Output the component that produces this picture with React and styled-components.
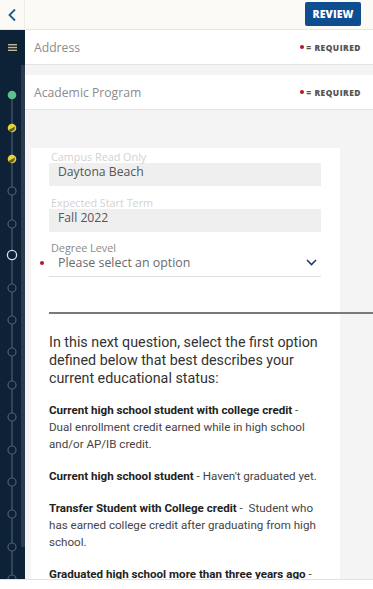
import React from "react";
import styled, { createGlobalStyle } from "styled-components";

const Global = createGlobalStyle`
  html, body { margin: 0; padding: 0; }
  body { width: 373px; height: 589px; overflow: hidden; background: #fff; font-family: "Open Sans", sans-serif; }
`;

const Page = styled.div`
  width: 373px;
  height: 589px;
  display: flex;
  flex-direction: column;
  overflow: hidden;
`;

const TopBar = styled.div`
  height: 30px;
  flex: none;
  display: flex;
  background: #fbfaf5;
  border-bottom: 1px solid #e6e6e6;
  box-sizing: border-box;
`;

const BackCell = styled.div`
  width: 25px;
  flex: none;
  display: flex;
  align-items: center;
  justify-content: center;
  border-right: 1px solid #ebebeb;
  box-sizing: border-box;
  color: #1f5b8e;
`;

const TopFill = styled.div`
  flex: 1;
  display: flex;
  justify-content: flex-end;
  align-items: center;
  padding-right: 12px;
`;

const ReviewButton = styled.button`
  width: 56px;
  height: 24px;
  margin-top: -2px;
  border: none;
  border-radius: 2px;
  background: #0e4d90;
  color: #fff;
  font-family: "Open Sans", sans-serif;
  font-weight: 800;
  font-size: 10.5px;
  letter-spacing: 0.1px;
  padding: 0;
`;

const Body = styled.div`
  flex: 1;
  display: flex;
  min-height: 0;
`;

const Sidebar = styled.div`
  width: 25px;
  flex: none;
  display: flex;
  flex-direction: column;
  background: #0d2137;
`;

const MenuCell = styled.div`
  height: 35px;
  flex: none;
  display: flex;
  align-items: center;
  justify-content: center;
  padding-right: 1px;
`;

const StepArea = styled.div`
  flex: 1;
  display: flex;
  overflow: hidden;
`;

const StepTrack = styled.div`
  width: 21px;
  flex: none;
  overflow: hidden;
`;

const StepStrip = styled.div`
  width: 4px;
  height: 482px;
  background: #2b3b4d;
`;

const Main = styled.div`
  flex: 1;
  display: flex;
  flex-direction: column;
  background: #f4f4f4;
  min-width: 0;
`;

const SectionHeader = styled.div`
  height: 35px;
  flex: none;
  background: #fff;
  display: flex;
  align-items: center;
  justify-content: space-between;
  padding: 0 12px 0 9px;
  border-bottom: 1px solid #e4e4e4;
  box-sizing: border-box;
  margin-bottom: ${(p) => p.$gap || 0}px;
`;

const SectionTitle = styled.span`
  font-family: "Open Sans", sans-serif;
  font-size: 12.2px;
  font-weight: 400;
  color: #8c8c8c;
`;

const Required = styled.span`
  display: flex;
  align-items: center;
  gap: 2px;
  font-family: "Open Sans", sans-serif;
  font-weight: 800;
  font-size: 8.4px;
  letter-spacing: 0.5px;
  color: #555;
`;

const RedDot = styled.span`
  width: 4px;
  height: 4px;
  border-radius: 50%;
  background: #b3162a;
  display: inline-block;
`;

const Canvas = styled.div`
  flex: 1;
  padding: 38px 0 0 6px;
  overflow: hidden;
  min-height: 0;
`;

const Card = styled.div`
  width: 309px;
  background: #fff;
  padding: 3px 0 0 18px;
  box-sizing: border-box;
  height: 100%;
`;

const Field = styled.div`
  width: 272px;
  margin-bottom: ${(p) => p.$mb || 0}px;
`;

const Label = styled.div`
  font-family: "Open Sans", sans-serif;
  font-size: 10.8px;
  line-height: 12px;
  height: 12px;
  padding-left: 2px;
  color: ${(p) => (p.$muted ? "#d2d2d2" : "#8a8a8a")};
`;

const ReadOnlyBox = styled.div`
  height: 23px;
  background: #efefef;
  padding: 0 9px;
  display: flex;
  align-items: flex-start;
  line-height: 17px;
  font-family: "Open Sans", sans-serif;
  font-size: 12.2px;
  color: #555;
`;

const SelectRow = styled.div`
  position: relative;
  height: 23px;
  box-sizing: border-box;
  padding: 0 4px 0 9px;
  display: flex;
  align-items: flex-start;
  justify-content: space-between;
  line-height: 17px;
  border-bottom: 1px solid #dedede;
  font-family: "Open Sans", sans-serif;
  font-size: 12.4px;
  color: #6a6a6a;
  svg { margin-top: 5px; }
`;

const SelectDot = styled(RedDot)`
  position: absolute;
  left: -9px;
  top: 7px;
`;

const Rule = styled.div`
  width: 340px;
  height: 2px;
  background: #7a7a7a;
  margin-top: 35px;
`;

const Intro = styled.p`
  margin: 19px 0 0;
  width: 290px;
  font-family: Roboto, "Liberation Sans", sans-serif;
  font-size: 14.3px;
  line-height: 18px;
  color: #333;
`;

const Item = styled.p`
  margin: 15px 0 0;
  width: 271px;
  font-family: Roboto, "Liberation Sans", sans-serif;
  font-size: 11.6px;
  line-height: 17px;
  color: #444;
  b { font-weight: 700; color: #222; }
`;

const Footer = styled.div`
  height: 9px;
  flex: none;
  background: #fff;
  border-top: 1px solid #e2e2e2;
`;

const steps = [
  { y: 30, k: "green" },
  { y: 63, k: "yellow" },
  { y: 94, k: "yellow" },
  { y: 126, k: "empty" },
  { y: 159, k: "empty" },
  { y: 190, k: "current" },
  { y: 223, k: "empty" },
  { y: 255, k: "empty" },
  { y: 287, k: "empty" },
  { y: 320, k: "empty" },
  { y: 352, k: "empty" },
  { y: 385, k: "empty" },
  { y: 417, k: "empty" },
  { y: 449, k: "empty" },
  { y: 482, k: "empty" },
  { y: 514, k: "empty" },
];

function Stepper() {
  return (
    <svg width="21" height="550" viewBox="0 0 21 550">
      <line x1="12" y1="30" x2="12" y2="550" stroke="#4b5d72" strokeWidth="1.2" />
      {steps.map((s, i) => {
        if (s.k === "green")
          return <circle key={i} cx="12" cy={s.y} r="4.3" fill="#5cc08c" />;
        if (s.k === "yellow")
          return (
            <g key={i}>
              <circle cx="12" cy={s.y} r="4.3" fill="#e7d436" />
              <path d={`M8.2 ${s.y + 2.3} L15 ${s.y - 1.6} L14.6 ${s.y + 1.2} Q13 ${s.y + 4} 10 ${s.y + 4} Z`} fill="#3a3a28" opacity="0.75" />
            </g>
          );
        if (s.k === "current")
          return <circle key={i} cx="12" cy={s.y} r="4.6" fill="#0d2137" stroke="#d6dde5" strokeWidth="1.3" />;
        return <circle key={i} cx="12" cy={s.y} r="4" fill="#0d2137" stroke="#4b5d72" strokeWidth="1.2" />;
      })}
    </svg>
  );
}

export default function App() {
  return (
    <Page>
      <Global />
      <TopBar>
        <BackCell>
          <svg width="10" height="14" viewBox="0 0 10 14">
            <path d="M8 1.5 L2.5 7 L8 12.5" fill="none" stroke="currentColor" strokeWidth="1.8" />
          </svg>
        </BackCell>
        <TopFill>
          <ReviewButton>REVIEW</ReviewButton>
        </TopFill>
      </TopBar>
      <Body>
        <Sidebar>
          <MenuCell>
            <svg width="9" height="7" viewBox="0 0 9 7">
              <rect x="0" y="0" width="9" height="1.4" fill="#c9b98a" />
              <rect x="0" y="2.8" width="9" height="1.4" fill="#c9b98a" />
              <rect x="0" y="5.6" width="9" height="1.4" fill="#c9b98a" />
            </svg>
          </MenuCell>
          <StepArea>
            <StepTrack>
              <Stepper />
            </StepTrack>
            <StepStrip />
          </StepArea>
        </Sidebar>
        <Main>
          <SectionHeader $gap={10}>
            <SectionTitle>Address</SectionTitle>
            <Required><RedDot />= REQUIRED</Required>
          </SectionHeader>
          <SectionHeader>
            <SectionTitle>Academic Program</SectionTitle>
            <Required><RedDot />= REQUIRED</Required>
          </SectionHeader>
          <Canvas>
            <Card>
              <Field $mb={11}>
                <Label $muted>Campus Read Only</Label>
                <ReadOnlyBox>Daytona Beach</ReadOnlyBox>
              </Field>
              <Field $mb={10}>
                <Label $muted>Expected Start Term</Label>
                <ReadOnlyBox>Fall 2022</ReadOnlyBox>
              </Field>
              <Field>
                <Label>Degree Level</Label>
                <SelectRow>
                  <SelectDot />
                  <span>Please select an option</span>
                  <svg width="11" height="7" viewBox="0 0 11 7">
                    <path d="M1 1 L5.5 5.5 L10 1" fill="none" stroke="#1d3f66" strokeWidth="1.6" />
                  </svg>
                </SelectRow>
              </Field>
              <Rule />
              <Intro>
                In this next question, select the first option defined below that best describes your current educational status:
              </Intro>
              <Item>
                <b>Current high school student with college credit</b> - Dual enrollment credit earned while in high school and/or AP/IB credit.
              </Item>
              <Item>
                <b>Current high school student</b> - Haven't graduated yet.
              </Item>
              <Item>
                <b>Transfer Student with College credit</b> -&nbsp; Student who has earned college credit after graduating from high school.
              </Item>
              <Item>
                <b>Graduated high school more than three years ago</b> - Student who graduated high school more than three years ago.
              </Item>
            </Card>
          </Canvas>
        </Main>
      </Body>
      <Footer />
    </Page>
  );
}
